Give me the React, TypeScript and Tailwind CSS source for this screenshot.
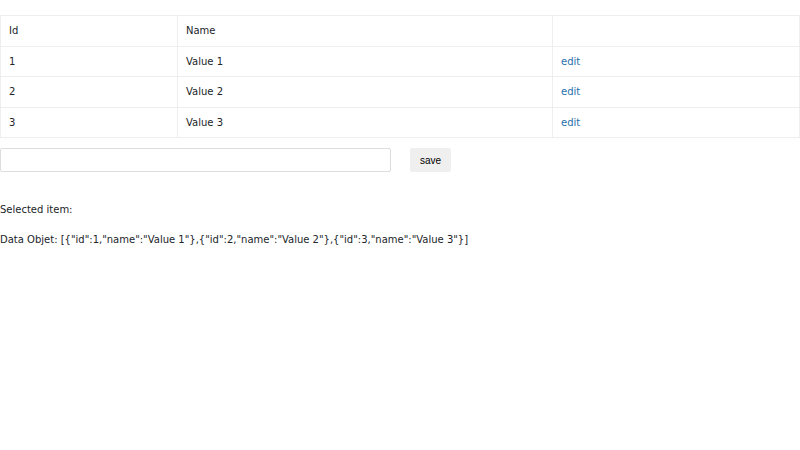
const rows = [
  { id: 1, name: 'Value 1' },
  { id: 2, name: 'Value 2' },
  { id: 3, name: 'Value 3' },
];

export default function App() {
  return (
    <div className="min-h-[450px] bg-white pt-[15px] text-[10px] leading-[15px] text-[#212529] font-['DejaVu_Sans',sans-serif]">
      {/* Table */}
      <table className="w-[800px] border-collapse">
        <thead>
          <tr className="h-[30.5px]">
            <th className="w-[177px] border border-[#eeeeee] px-2 text-left font-normal">Id</th>
            <th className="w-[375px] border border-[#eeeeee] px-2 text-left font-normal">Name</th>
            <th className="border border-[#eeeeee] px-2"></th>
          </tr>
        </thead>
        <tbody>
          {rows.map((r) => (
            <tr key={r.id} className="h-[30.5px]">
              <td className="border border-[#eeeeee] px-2">{r.id}</td>
              <td className="border border-[#eeeeee] px-2">{r.name}</td>
              <td className="border border-[#eeeeee] px-2">
                <a className="text-[#1f6fab] cursor-pointer">edit</a>
              </td>
            </tr>
          ))}
        </tbody>
      </table>

      {/* Form */}
      <div className="mt-[10px] flex items-center gap-[19px]">
        <input className="h-[24px] w-[391px] border border-[#dddddd] rounded-[2px] px-1 outline-none" />
        <button className="h-[24px] rounded-[2px] bg-[#efefef] px-[10px] text-[10px] text-black font-['Liberation_Sans',sans-serif]">
          save
        </button>
      </div>

      <p className="mt-[30px]">Selected item:</p>
      <p className="mt-[15px]">Data Objet: {JSON.stringify(rows)}</p>
    </div>
  );
}
